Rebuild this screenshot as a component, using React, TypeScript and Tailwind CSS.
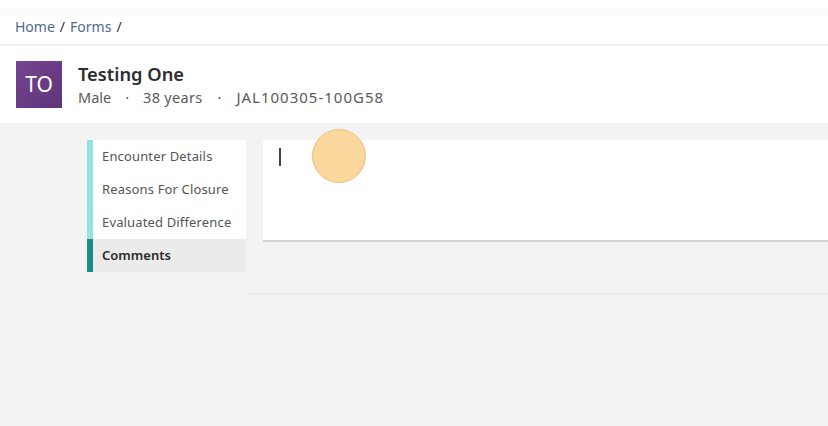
import React from "react";

const navItems = [
  { label: "Encounter Details", active: false },
  { label: "Reasons For Closure", active: false },
  { label: "Evaluated Difference", active: false },
  { label: "Comments", active: true },
];

const App = () => {
  return (
    <div
      className="relative flex h-[426px] w-[828px] flex-col overflow-hidden bg-[#f3f3f3]"
      style={{ fontFamily: '"Noto Sans", "Open Sans", sans-serif' }}
    >
      {/* breadcrumb */}
      <div className="flex h-[44px] flex-col bg-white">
        <div className="mt-[8px] h-[7px] bg-[#fafbfb]" />
        <div className="flex items-center gap-[5px] px-[15px] pt-[1px] text-[14px] text-[#4d6a8f]">
          <span>Home</span>
          <span className="text-[#333]">/</span>
          <span>Forms</span>
          <span className="text-[#333]">/</span>
        </div>
      </div>
      <div className="h-[2px] bg-[#efefef]" />

      {/* patient header */}
      <div className="flex h-[77px] items-center gap-[16px] bg-white pl-[16px]">
        <div className="flex h-[47px] w-[46px] items-center justify-center bg-gradient-to-br from-[#74468f] via-[#6a3c86] to-[#5e3479] text-[21px] text-white">
          TO
        </div>
        <div className="flex flex-col">
          <div className="text-[18.3px] font-semibold leading-[24px] text-[#2d2d2d]">
            Testing One
          </div>
          <div className="flex items-center text-[14.5px] leading-[22px] text-[#5a5a5a]">
            <span>Male</span>
            <span className="mx-[14px]">·</span>
            <span className="tracking-[0.3px]">38 years</span>
            <span className="mx-[15px]">·</span>
            <span className="text-[15px] tracking-[1px]">JAL100305-100G58</span>
          </div>
        </div>
      </div>

      {/* body */}
      <div className="flex flex-1 pt-[17px]">
        <div className="ml-[87px] flex w-[159px] flex-col">
          {navItems.map((item) => (
            <div
              key={item.label}
              className={`flex h-[33px] items-center ${
                item.active ? "bg-[#ebebeb]" : "bg-white"
              }`}
            >
              <div
                className={`h-full w-[6px] ${
                  item.active ? "bg-[#1b8c83]" : "bg-[#93e3e1]"
                }`}
              />
              <span
                className={`pl-[9px] text-[13px] ${
                  item.active
                    ? "font-semibold text-[#2a2a2a]"
                    : "tracking-[0.15px] text-[#555]"
                }`}
              >
                {item.label}
              </span>
            </div>
          ))}
        </div>

        <div className="ml-[2px] flex flex-1 flex-col">
          <div className="pl-[15px]">
            <div className="h-[102px] border-b-[2px] border-[#d3d3d3] bg-white pl-[15px] pt-[8px]">
              <div className="h-[18px] w-[2px] translate-x-[1px] bg-[#444]" />
            </div>
          </div>
          <div className="mt-[51px] h-[2px] bg-[#ebebeb]" />
        </div>
      </div>

      {/* click highlight */}
      <div className="absolute left-[312px] top-[129px] h-[54px] w-[54px] rounded-full border-[1.5px] border-[#eec07f] bg-[#fad79c]" />
    </div>
  );
};

export default App;
